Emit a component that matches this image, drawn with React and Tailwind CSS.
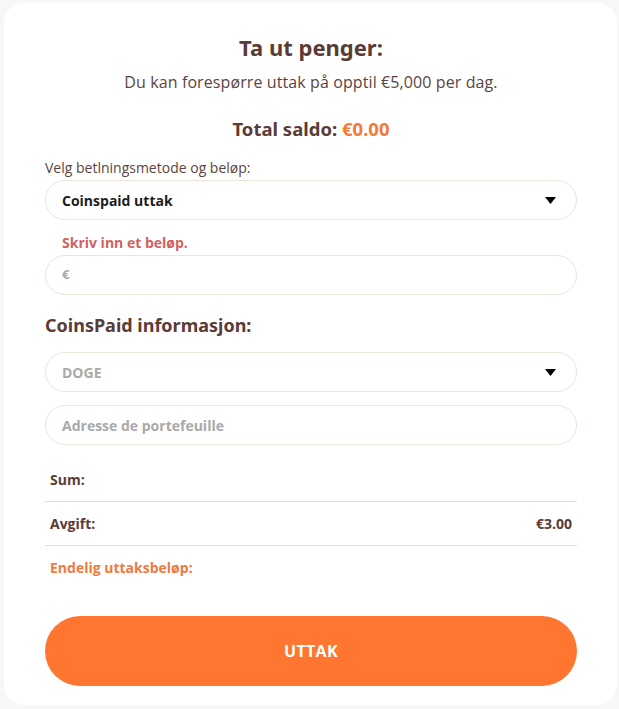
import React from "react";

const Caret = () => (
  <svg className="w-[11px] h-[7px]" viewBox="0 0 11 7" fill="currentColor">
    <path d="M0 0h11L5.5 7z" />
  </svg>
);

const App = () => {
  return (
    <div className="min-h-[709px] bg-[#f7f7f7] pt-[3px] pb-[4px] pl-[4px] pr-[2px] font-['Open_Sans',sans-serif]">
      <div className="bg-white rounded-[20px] pl-[41px] pr-[40px] pt-[27px] pb-[19px]">
        {/* Header */}
        <h1 className="text-center text-[22px] leading-[34px] font-bold text-[#5b3b36] font-['Noto_Sans',sans-serif]">
          Ta ut penger:
        </h1>
        <p className="text-center text-[16px] leading-[24px] text-[#5b4441] mt-[6px] tracking-[0.1px]">
          Du kan forespørre uttak på opptil €5,000 per dag.
        </p>
        <p className="text-center text-[18.5px] leading-[28px] font-bold text-[#5b3b36] mt-[21px] font-['Noto_Sans',sans-serif]">
          Total saldo: <span className="text-[#f47a36]">€0.00</span>
        </p>

        {/* Payment method */}
        <label className="block text-[14px] leading-[20px] text-[#5b4441] mt-[15px]">
          Velg betlningsmetode og beløp:
        </label>
        <div className="mt-[2px] h-[40px] rounded-full border border-[#ebe5da] flex items-center justify-between pl-[16px] pr-[20px]">
          <span className="text-[14px] font-bold text-[#1d1d1d]">Coinspaid uttak</span>
          <span className="text-black"><Caret /></span>
        </div>
        <p className="text-[14px] leading-[20px] font-bold text-[#d0625f] pl-[17px] mt-[13px]">
          Skriv inn et beløp.
        </p>
        <div className="mt-[2px] h-[40px] rounded-full border border-[#ebe5da] flex items-center pl-[16px]">
          <span className="text-[13px] font-bold text-[#a9a9a9]">€</span>
        </div>

        {/* CoinsPaid info */}
        <h2 className="text-[18px] leading-[28px] font-bold text-[#5b3b36] mt-[16px] font-['Noto_Sans',sans-serif]">
          CoinsPaid informasjon:
        </h2>
        <div className="mt-[13px] h-[40px] rounded-full border border-[#ebe5da] flex items-center justify-between pl-[16px] pr-[20px]">
          <span className="text-[14px] font-bold text-[#a9a9a9]">DOGE</span>
          <span className="text-black"><Caret /></span>
        </div>
        <div className="mt-[13px] h-[40px] rounded-full border border-[#ebe5da] flex items-center pl-[16px]">
          <span className="text-[14px] font-bold text-[#a9a9a9]">Adresse de portefeuille</span>
        </div>

        {/* Summary */}
        <div className="mt-[13px] text-[14px] font-bold">
          <div className="flex justify-between items-center h-[44px] px-[5px] border-b border-[#e5dfd5] text-[#5b3b36]">
            <span>Sum:</span>
            <span></span>
          </div>
          <div className="flex justify-between items-center h-[44px] px-[5px] border-b border-[#e5dfd5] text-[#5b3b36]">
            <span>Avgift:</span>
            <span>€3.00</span>
          </div>
          <div className="flex justify-between items-center h-[43px] px-[5px] text-[#f07a3e]">
            <span>Endelig uttaksbeløp:</span>
            <span></span>
          </div>
        </div>

        <button className="mt-[27px] w-full h-[70px] rounded-full bg-[#ff7631] text-white text-[16px] font-bold tracking-[0.3px]">
          UTTAK
        </button>
      </div>
    </div>
  );
};

export default App;
